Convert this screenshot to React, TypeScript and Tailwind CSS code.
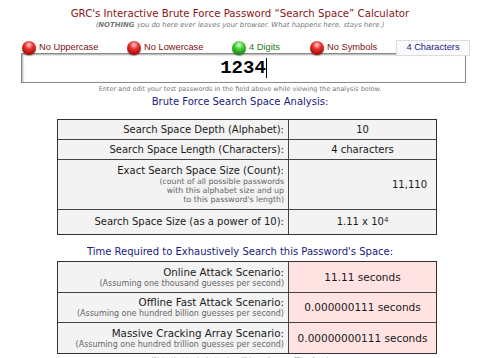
import React from 'react';

const Ball: React.FC<{ on?: boolean }> = ({ on }) => (
  <span
    className={
      on
        ? 'inline-block w-[14px] h-[14px] rounded-full shrink-0 bg-[radial-gradient(circle_at_50%_28%,#d8ffd0_0%,#4ccf3a_35%,#168a10_75%,#0b4f08_100%)] shadow-[0_1px_1px_rgba(0,0,0,0.35)]'
        : 'inline-block w-[14px] h-[14px] rounded-full shrink-0 bg-[radial-gradient(circle_at_50%_28%,#ffd0d0_0%,#e8322e_35%,#a80d0d_75%,#5a0505_100%)] shadow-[0_1px_1px_rgba(0,0,0,0.35)]'
    }
  />
);

const Indicator: React.FC<{ on?: boolean; label: string; w: string }> = ({ on, label, w }) => (
  <div className={`flex items-center gap-[3px] ${w}`}>
    <Ball on={on} />
    <span className={on ? 'text-[#1e7d1e]' : 'text-[#7a1010]'}>{label}</span>
  </div>
);

// one row of the analysis tables: label cell on the left, value cell on the right
const Row: React.FC<{
  h: string;
  first?: boolean;
  label: React.ReactNode;
  value: React.ReactNode;
  valueClass?: string;
}> = ({ h, first, label, value, valueClass }) => (
  <div className={`flex ${h} ${first ? '' : 'border-t border-[#444]'}`}>
    <div className="w-[231px] shrink-0 border-r border-[#444] bg-[#f3f3f3] flex flex-col justify-center items-end text-right pr-[4px]">
      {label}
    </div>
    <div className={`flex-1 flex items-center ${valueClass ?? 'justify-center bg-[#f3f3f3]'}`}>{value}</div>
  </div>
);

const App: React.FC = () => {
  return (
    <div className="w-[480px] h-[358px] overflow-hidden bg-white font-['DejaVu_Sans',sans-serif]">
      <div className="pt-[7px] h-[21px] text-center text-[10.2px] leading-[14px] text-[#8b1515]">
        GRC's Interactive Brute Force Password &ldquo;Search Space&rdquo; Calculator
      </div>
      <div className="h-[9px] text-center text-[6.9px] leading-[9px] italic text-[#777]">
        (<b>NOTHING</b> you do here ever leaves your browser. What happens here, stays here.)
      </div>

      <div className="mt-[9px] h-[18px] flex items-center pl-[22px] font-['Liberation_Sans',sans-serif] text-[9.3px]">
        <Indicator label="No Uppercase" w="w-[105px]" />
        <Indicator label="No Lowercase" w="w-[105px]" />
        <Indicator on label="4 Digits" w="w-[78px]" />
        <Indicator label="No Symbols" w="w-[86px]" />
        <div className="w-[74px] h-[16px] flex items-center justify-center border border-[#dcdcdc] bg-[#fafaff] text-[#1a1a7a]">
          4 Characters
        </div>
      </div>

      <div className="mx-[21px] w-[445px] h-[30px] mt-[-4px] border border-[#8a8a8a] shadow-[inset_1px_1px_2px_rgba(0,0,0,0.35)] bg-white flex items-center justify-center">
        <span className="font-['Liberation_Mono',monospace] font-bold text-[19px] text-black">1234</span>
        <span className="w-px h-[20px] bg-black" />
      </div>

      <div className="mt-[1px] h-[10px] text-center text-[6.5px] leading-[10px] text-[#777]">
        Enter and edit your test passwords in the field above while viewing the analysis below.
      </div>

      <div className="mt-[1px] h-[14px] text-center text-[10px] leading-[14px] text-[#1a1a80]">
        Brute Force Search Space Analysis:
      </div>

      <div className="mt-[10px] ml-[57px] w-[380px] border border-[#333] text-[10px] leading-[12px] text-[#1a1a1a]">
        <Row first h="h-[19px]" label="Search Space Depth (Alphabet):" value="10" />
        <Row h="h-[20px]" label="Search Space Length (Characters):" value="4 characters" />
        <Row
          h="h-[50px]"
          label={
            <>
              <div>Exact Search Space Size (Count):</div>
              <div className="text-[7.8px] leading-[9px] text-[#666]">
                (count of all possible passwords
                <br />
                with this alphabet size and up
                <br />
                to this password's length)
              </div>
            </>
          }
          value="11,110"
          valueClass="justify-end pr-[9px] bg-[#f3f3f3]"
        />
        <Row
          h="h-[25px]"
          label="Search Space Size (as a power of 10):"
          value={
            <span>
              1.11 x 10<sup className="text-[7px]">4</sup>
            </span>
          }
        />
      </div>

      <div className="mt-[10px] h-[14px] text-center text-[10px] leading-[14px] text-[#1a1a80]">
        Time Required to Exhaustively Search this Password's Space:
      </div>

      <div className="mt-[2px] ml-[57px] w-[380px] border border-[#333] text-[10.3px] leading-[13px] text-[#1a1a1a]">
        <Row
          first
          h="h-[30px]"
          label={
            <>
              <div>Online Attack Scenario:</div>
              <div className="text-[8px] leading-[10px] text-[#666]">(Assuming one thousand guesses per second)</div>
            </>
          }
          value="11.11 seconds"
          valueClass="justify-center bg-[#ffe2e2] text-[10.5px]"
        />
        <Row
          h="h-[30px]"
          label={
            <>
              <div>Offline Fast Attack Scenario:</div>
              <div className="text-[8px] leading-[10px] text-[#666]">(Assuming one hundred billion guesses per second)</div>
            </>
          }
          value="0.000000111 seconds"
          valueClass="justify-center bg-[#ffe2e2] text-[10.5px]"
        />
        <Row
          h="h-[31px]"
          label={
            <>
              <div>Massive Cracking Array Scenario:</div>
              <div className="text-[8px] leading-[10px] text-[#666]">(Assuming one hundred trillion guesses per second)</div>
            </>
          }
          value="0.00000000111 seconds"
          valueClass="justify-center bg-[#ffe2e2] text-[10.5px]"
        />
      </div>

      <div className="mt-[1px] h-[10px] text-center text-[6.5px] leading-[10px] text-[#999]">
        (Note that typical attacks will be online or offline fast.)
      </div>
    </div>
  );
};

export default App;
